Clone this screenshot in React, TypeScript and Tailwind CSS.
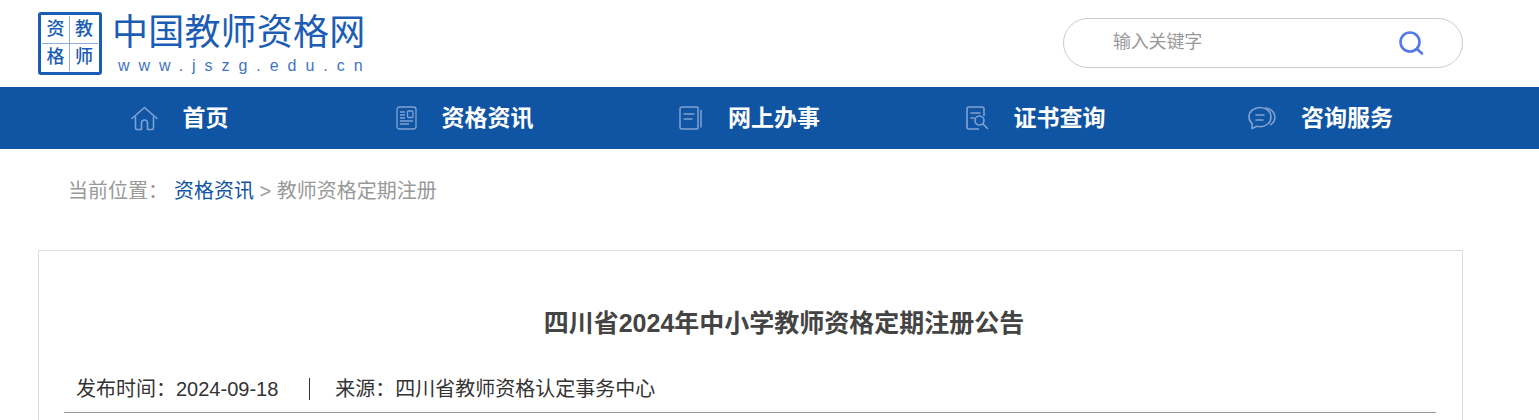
import type { ReactNode } from 'react';

const font = { fontFamily: '"Liberation Sans", "Noto Sans CJK SC", sans-serif' };

function HomeIcon() {
  return (
    <svg width="27" height="25" viewBox="0 0 27 25" fill="none" stroke="#7fa3d1" strokeWidth="1.6">
      <path d="M1 12.500 13.500 1.500 26 12.500" strokeLinecap="round" strokeLinejoin="round" />
      <path d="M4.500 10.500V22a1.500 1.500 0 0 0 1.500 1.500h4.500V17a3 3 0 0 1 6 0v6.500H21a1.500 1.500 0 0 0 1.500-1.500V10.500" strokeLinejoin="round" />
    </svg>
  );
}

function NewsIcon() {
  return (
    <svg width="21" height="24" viewBox="0 0 21 24" fill="none" stroke="#7fa3d1" strokeWidth="1.300">
      <rect x="1" y="1" width="19" height="22" rx="2.500" />
      <path d="M4 6h5M4 9h5M4 12h5M4 15h13M4 18h9" />
      <rect x="11.500" y="5" width="5.500" height="6.500" rx="1" />
    </svg>
  );
}

function BookIcon() {
  return (
    <svg width="24" height="24" viewBox="0 0 24 24" fill="none" stroke="#7fa3d1" strokeWidth="1.500">
      <path d="M18 1H3a2 2 0 0 0-2 2v18a2 2 0 0 0 2 2h15a1 1 0 0 0 1-1V2a1 1 0 0 0-1-1Z" />
      <path d="M22 4.500V21" strokeLinecap="round" />
      <path d="M5 8h10M5 13h8" strokeLinecap="round" />
    </svg>
  );
}

function CertIcon() {
  return (
    <svg width="23" height="24" viewBox="0 0 23 24" fill="none" stroke="#7fa3d1" strokeWidth="1.600">
      <path d="M18 10V3a2 2 0 0 0-2-2H3a2 2 0 0 0-2 2v18a2 2 0 0 0 2 2h10" />
      <path d="M5 7h9M5 12h3" strokeLinecap="round" />
      <circle cx="13.500" cy="14.500" r="4.500" />
      <path d="m17 18 4.500 4.500" strokeLinecap="round" />
    </svg>
  );
}

function ChatIcon() {
  return (
    <svg width="28" height="24" viewBox="0 0 28 24" fill="none" stroke="#7fa3d1" strokeWidth="1.600">
      <path d="M12 1.500C6 1.500 1 5.500 1 11c0 2.800 1.200 5 3.200 6.700L4 22.500l5-2.200c1 .3 2 .4 3 .4 6 0 11-4 11-9.700s-5-9.500-11-9.500Z" strokeLinejoin="round" />
      <path d="M18 2c5 .9 9 4.300 9 9 0 3.200-1.600 5.800-4.300 7.600" strokeLinecap="round" />
      <path d="M8 9h8M8 14h7" strokeLinecap="round" />
    </svg>
  );
}

const navItems: { label: string; icon: ReactNode }[] = [
  { label: '首页', icon: <HomeIcon /> },
  { label: '资格资讯', icon: <NewsIcon /> },
  { label: '网上办事', icon: <BookIcon /> },
  { label: '证书查询', icon: <CertIcon /> },
  { label: '咨询服务', icon: <ChatIcon /> },
];

function Logo() {
  return (
    <div className="flex gap-3">
      <div className="mt-3 grid h-[63px] w-16 grid-cols-2 grid-rows-2 rounded-[3px] border-[3px] border-[#1b5cb5] bg-white p-px text-[18px] leading-none font-medium text-[#1b5cb5]">
        <span className="flex items-center justify-center border-r border-b border-[#8fadda]">资</span>
        <span className="flex items-center justify-center border-b border-[#8fadda]">教</span>
        <span className="flex items-center justify-center border-r border-[#8fadda]">格</span>
        <span className="flex items-center justify-center">师</span>
      </div>
      <div className="mt-[10px]">
        <p className="-ml-[2px] text-[36px] leading-[46px] tracking-[0.2px] whitespace-nowrap text-[#1b5cb5]">中国教师资格网</p>
        <p className="mt-[1px] ml-1 text-[16px] leading-[17px] tracking-[0.56em] whitespace-nowrap text-[#3f74c4]">www.jszg.edu.cn</p>
      </div>
    </div>
  );
}

export default function App() {
  return (
    <div className="h-[420px] overflow-hidden bg-white" style={font}>
      <header className="ml-[38px] flex h-[87px] w-[1425px] justify-between">
        <Logo />
        <div className="mt-[18px] flex h-[50px] w-[400px] items-center justify-between rounded-full border border-[#ccc] pr-[38px] pl-[49px]">
          <span className="-mt-[2px] text-[18px] tracking-[-0.2px] text-[#999]">输入关键字</span>
          <svg width="26" height="26" viewBox="0 0 26 26" fill="none" stroke="#5578e6" strokeWidth="2.600">
            <circle cx="12" cy="12" r="9.500" />
            <path d="m19 19 5 4.500" strokeLinecap="round" />
          </svg>
        </div>
      </header>

      <nav className="h-[62px] bg-[#1054a4]">
        <ul className="ml-[38px] grid h-full w-[1425px] grid-cols-5">
          {navItems.map((item) => (
            <li key={item.label} className="flex items-center justify-center gap-[25px] pr-[2px] nth-[n+4]:pr-0">
              {item.icon}
              <span className="text-[23px] font-bold text-white">{item.label}</span>
            </li>
          ))}
        </ul>
      </nav>

      <p className="mt-[28px] ml-[68px] text-[20px] leading-7 text-[#999]">
        当前位置：
        <span className="ml-[6px] text-[#1054a4]">资格资讯</span>
        <span> &gt; 教师资格定期注册</span>
      </p>

      <main className="mt-[45px] ml-[38px] h-[400px] w-[1425px] border border-[#ddd] bg-white pr-[26px] pl-[25px]">
        <h1 className="mt-[54px] pl-[68px] text-center text-[25px] leading-9 font-bold text-[#444]">
          四川省2024年中小学教师资格定期注册公告
        </h1>
        <div className="mt-[26px] flex h-[46px] items-center border-b border-[#999] pb-[2px] pl-[12px] text-[20px] text-[#333]">
          <span>发布时间：2024-09-18</span>
          <span className="mr-[25px] ml-[31px] h-[22px] border-l border-[#333]" />
          <span>来源：四川省教师资格认定事务中心</span>
        </div>
      </main>
    </div>
  );
}
